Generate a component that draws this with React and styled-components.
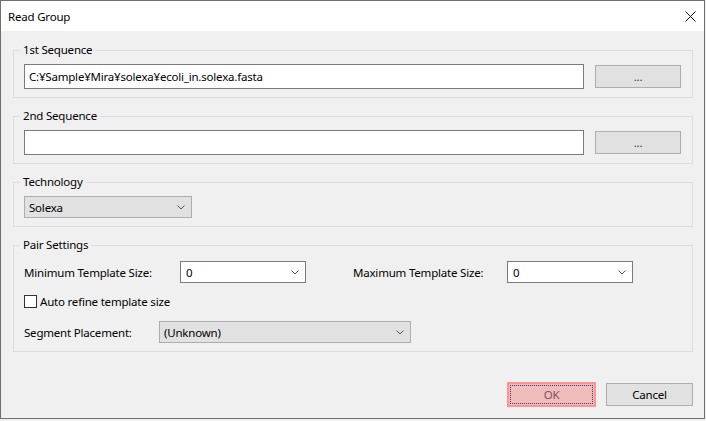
import styled, { createGlobalStyle } from "styled-components";

const GlobalStyle = createGlobalStyle`
  html, body {
    margin: 0;
    padding: 0;
    background: #f0f0f0;
  }
  body {
    font-family: "Noto Sans", "Liberation Sans", sans-serif;
    font-size: 11.5px;
    letter-spacing: -0.2px;
    color: #000;
  }
`;

const Window = styled.div`
  width: 705px;
  height: 419px;
  box-sizing: border-box;
  border: 1px solid #6f6f6f;
  background: #f0f0f0;
  display: flex;
  flex-direction: column;
`;

const TitleBar = styled.div`
  height: 30px;
  flex: none;
  background: #fff;
  display: flex;
  align-items: center;
  justify-content: space-between;
  padding: 0 8px 0 7px;
`;

const Title = styled.span`
  color: #000;
`;

const Body = styled.div`
  flex: 1;
  display: flex;
  flex-direction: column;
  gap: 11px;
  padding: 12px 11px 0 12px;
`;

const Group = styled.fieldset`
  margin: 0;
  min-width: 0;
  box-sizing: border-box;
  width: 680px;
  border: 1px solid #dcdcdc;
  padding: ${(p) => p.$pt || 7}px 0 8px 10px;
`;

const Legend = styled.legend`
  padding: 0 3px;
  margin-left: -4px;
  line-height: 14px;
  height: 14px;
`;

const Row = styled.div`
  display: flex;
  align-items: center;
  height: ${(p) => p.$h || 25}px;
  gap: ${(p) => p.$gap || 0}px;
`;

const TextBox = styled.div`
  width: 560px;
  height: 25px;
  box-sizing: border-box;
  border: 1px solid #7a7a7a;
  background: #fff;
  padding-left: 4px;
  display: flex;
  align-items: center;
`;

const Button = styled.button`
  font: inherit;
  letter-spacing: inherit;
  box-sizing: border-box;
  width: ${(p) => p.$w || 86}px;
  height: ${(p) => p.$h || 23}px;
  border: 1px solid #adadad;
  background: #e1e1e1;
  color: ${(p) => p.$color || "#000"};
  padding: 0;
  display: flex;
  align-items: center;
  justify-content: center;
`;

const DefaultButton = styled(Button)`
  border: 2px solid #ff9393;
  background: #f1bcbc;
  color: #8a4d5d;
  position: relative;
  &::after {
    content: "";
    position: absolute;
    inset: 1px;
    border: 1px dotted #3c3c6c;
  }
`;

const Combo = styled.div`
  width: ${(p) => p.$w}px;
  height: 22px;
  box-sizing: border-box;
  border: 1px solid ${(p) => (p.$editable ? "#7a7a7a" : "#adadad")};
  background: ${(p) => (p.$editable ? "#fff" : "#e1e1e1")};
  display: flex;
  align-items: center;
  justify-content: space-between;
  padding: 0 6px 0 ${(p) => (p.$editable ? 5 : 4)}px;
`;

const FieldLabel = styled.span`
  width: ${(p) => p.$w}px;
  margin-left: ${(p) => p.$ml || 0}px;
  flex: none;
`;

const Check = styled.span`
  width: 13px;
  height: 13px;
  box-sizing: border-box;
  border: 1px solid #333;
  background: #fff;
  margin-right: 3px;
`;

const Footer = styled.div`
  display: flex;
  justify-content: flex-end;
  align-items: center;
  gap: 10px;
  margin-top: 19px;
`;

const Chevron = () => (
  <svg width="8" height="5" viewBox="0 0 8 5">
    <polyline points="0.5,0.5 4,4 7.5,0.5" fill="none" stroke="#555" strokeWidth="1" />
  </svg>
);

const CloseIcon = () => (
  <svg width="11" height="11" viewBox="0 0 11 11">
    <path d="M0.5 0.5 L10.5 10.5 M10.5 0.5 L0.5 10.5" stroke="#111" strokeWidth="1" />
  </svg>
);

const SelectBox = ({ w, editable, value }) => (
  <Combo $w={w} $editable={editable}>
    <span>{value}</span>
    <Chevron />
  </Combo>
);

const App = () => {
  return (
    <>
      <GlobalStyle />
      <Window>
        <TitleBar>
          <Title>Read Group</Title>
          <CloseIcon />
        </TitleBar>
        <Body>
          <Group>
            <Legend>1st Sequence</Legend>
            <Row $gap={11}>
              <TextBox>C:¥Sample¥Mira¥solexa¥ecoli_in.solexa.fasta</TextBox>
              <Button $color="#1c3c7c">...</Button>
            </Row>
          </Group>
          <Group>
            <Legend>2nd Sequence</Legend>
            <Row $gap={11}>
              <TextBox />
              <Button $color="#1c3c7c">...</Button>
            </Row>
          </Group>
          <Group>
            <Legend>Technology</Legend>
            <Row $h={22}>
              <SelectBox w={168} value="Solexa" />
            </Row>
          </Group>
          <Group $pt={9}>
            <Legend>Pair Settings</Legend>
            <Row $h={22}>
              <FieldLabel $w={156}>Minimum Template Size:</FieldLabel>
              <SelectBox w={126} editable value="0" />
              <FieldLabel $w={154} $ml={47}>
                Maximum Template Size:
              </FieldLabel>
              <SelectBox w={126} editable value="0" />
            </Row>
            <Row $h={13} style={{ marginTop: 12 }}>
              <Check />
              <span>Auto refine template size</span>
            </Row>
            <Row $h={22} style={{ marginTop: 13 }}>
              <FieldLabel $w={135}>Segment Placement:</FieldLabel>
              <SelectBox w={252} value="(Unknown)" />
            </Row>
          </Group>
          <Footer>
            <DefaultButton $w={89} $h={25}>OK</DefaultButton>
            <Button $w={87} $h={23}>Cancel</Button>
          </Footer>
        </Body>
      </Window>
    </>
  );
};

export default App;
